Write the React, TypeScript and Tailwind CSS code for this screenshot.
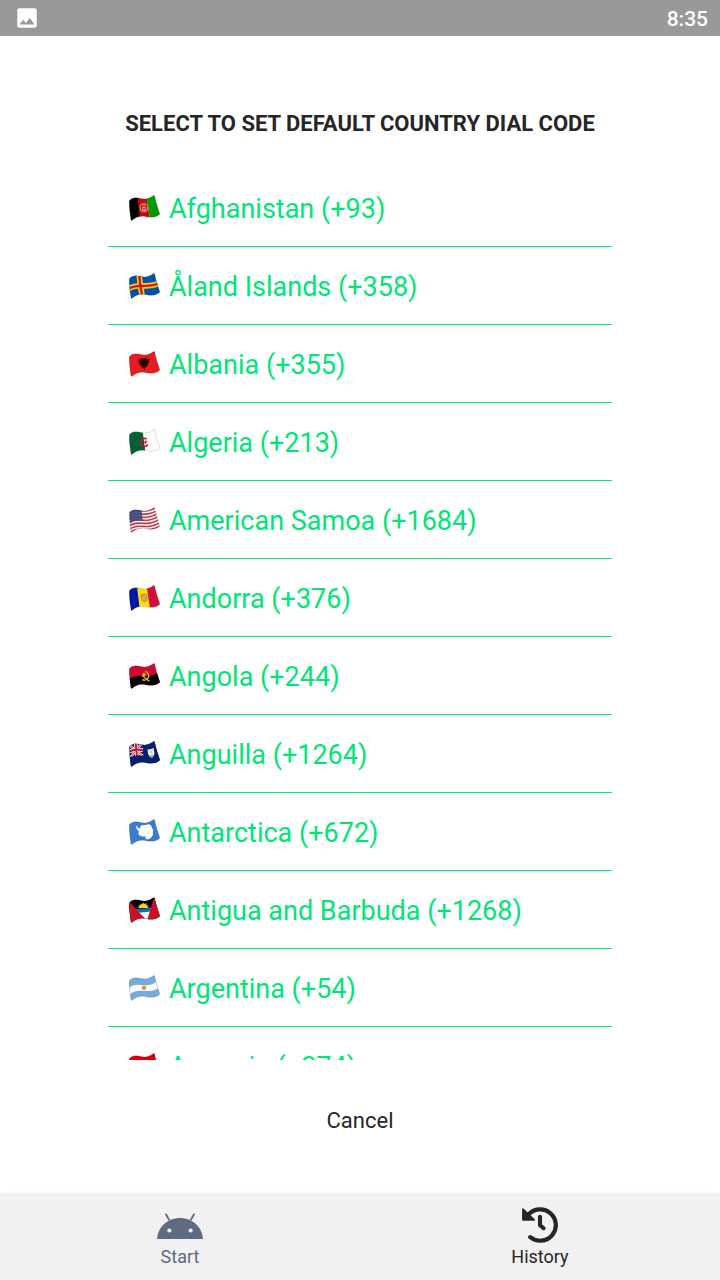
import type { ReactNode } from "react";
import { MdImage } from "react-icons/md";

const OUTLINE =
  "M0.2 6.4 Q0.2 5.4 1 4.9 C4.5 2.3 8 2.5 12 3.6 C17 4.9 20.5 3.2 24.6 0.5 Q25.4 0.1 25.7 1 C26.8 7 28.8 12.6 30.7 18.4 Q30.9 19.2 30.2 19.7 C26.5 22.4 22 22.9 17 21.7 C11.5 20.5 7.5 21.8 3.1 25.2 Q2.3 25.7 2 24.9 C0.9 18 0.2 12 0.2 6.4Z";

function Flag({ code, children }: { code: string; children: ReactNode }) {
  return (
    <svg viewBox="0 0 31 26" className="h-[26px] w-[31px] shrink-0" aria-hidden="true">
      <defs>
        <clipPath id={`flag-${code}`}>
          <path d={OUTLINE} />
        </clipPath>
      </defs>
      <g clipPath={`url(#flag-${code})`}>{children}</g>
      <path d={OUTLINE} fill="none" stroke="#1a1a1a" strokeOpacity="0.2" strokeWidth="0.7" />
    </svg>
  );
}

const stripes = [0, 1, 2, 3, 4, 5, 6];

const countries: { code: string; name: string; dial: string; art: ReactNode }[] = [
  {
    code: "af",
    name: "Afghanistan",
    dial: "+93",
    art: (
      <>
        <path fill="#000" d="M-1 0H9L12 26H-1Z" />
        <path fill="#c10b12" d="M8.3 0H17.4L21.2 26H11.2Z" />
        <path fill="#009a00" d="M17.2 0H31V26H21.2Z" />
        <circle cx="15" cy="12.8" r="3.9" fill="none" stroke="#e58a85" strokeWidth="1.2" />
        <path d="M12.9 14.9h4.4M13.6 12.4h2.8v2.1h-2.8zM15 10.3v2" stroke="#e58a85" strokeWidth="1.1" fill="none" />
      </>
    ),
  },
  {
    code: "ax",
    name: "Åland Islands",
    dial: "+358",
    art: (
      <>
        <path fill="#0053a5" d="M0 0H31V26H0Z" />
        <path d="M10 0Q10.8 13 13.8 26M0 15.5C10 9 18 17 31 9.5" stroke="#ffce00" strokeWidth="5.6" fill="none" />
        <path d="M10 0Q10.8 13 13.8 26M0 15.5C10 9 18 17 31 9.5" stroke="#d21034" strokeWidth="2.3" fill="none" />
      </>
    ),
  },
  {
    code: "al",
    name: "Albania",
    dial: "+355",
    art: (
      <>
        <path fill="#e41e20" d="M0 0H31V26H0Z" />
        <path
          fill="#2a0505"
          d="M14.7 8.2 13 6.7 11.7 7.6 12.7 8.8 9 8.3 10 10.4 9.2 11 10.7 12 10 13 11.7 13.4 11 15 12.8 14.6 12.2 16.5 14 16.2 15.2 18.9 16.1 16.2 18.3 16 17.4 14.4 19.4 14.1 18.6 12.5 20.6 11.4 19.6 10.5 20.8 8 17.3 8.6 18 7.2 16.7 6.6Z"
        />
      </>
    ),
  },
  {
    code: "dz",
    name: "Algeria",
    dial: "+213",
    art: (
      <>
        <path fill="#fbfbfb" d="M0 0H31V26H0Z" />
        <path fill="#006233" d="M0 0H13.3L16.8 26H0Z" />
        <path d="M17.6 10.1A4 4 0 1 0 18.8 15.5" stroke="#d21034" strokeWidth="1.6" fill="none" />
        <path fill="#d21034" d="M18.7 12.6 16.9 12.3 16.1 10.8 15.9 12.5 14.3 13 15.8 13.7 16 15.3 17.1 14Z" />
      </>
    ),
  },
  {
    code: "as",
    name: "American Samoa",
    dial: "+1684",
    art: (
      <>
        <path fill="#f7f3f4" d="M0 0H31V26H0Z" />
        {stripes.map((i) => (
          <path
            key={i}
            d="M-2 6.5C7 -0.5 14 9 29 -0.5"
            transform={`translate(${i * 0.6} ${i * 3.1})`}
            stroke="#bd3d50"
            strokeWidth="1.6"
            fill="none"
          />
        ))}
        <path fill="#48497f" d="M0 0H12.1L13.8 14Q7 12.6 1 16Z" />
        <path
          d="M2 7.2Q7 4.4 12 6M2.3 10Q7 7.2 12.5 8.8M2.7 13Q7 10.4 13 11.8"
          stroke="#8a8ab0"
          strokeWidth="0.7"
          strokeDasharray="0.8 1.2"
          fill="none"
        />
      </>
    ),
  },
  {
    code: "ad",
    name: "Andorra",
    dial: "+376",
    art: (
      <>
        <path fill="#0018a8" d="M0 0H8.5L11.5 26H0Z" />
        <path fill="#fedf00" d="M7.8 0H17.8L21.8 26H11Z" />
        <path fill="#d0103a" d="M17.4 0H31V26H21.4Z" />
        <path fill="#d29a36" d="M11.4 9.4Q14.8 7.7 18 8.9L19 13.6Q18.8 16.3 15.7 17.5 12.3 16.7 11.8 14Z" />
        <path d="M12.8 10.8 17.4 15.2M17 10.2 13.2 15.4" stroke="#e3b04a" strokeWidth="1.2" />
      </>
    ),
  },
  {
    code: "ao",
    name: "Angola",
    dial: "+244",
    art: (
      <>
        <path fill="#cc092f" d="M0 0H31V26H0Z" />
        <path fill="#000" d="M0 16.5C8 9.5 18 17 31 9V26H0Z" />
        <path d="M16.5 8.3Q20.8 10.5 19.4 14.6 17.4 18.3 13.3 16.6M13.5 12.8 20.3 18.3" stroke="#e8bf16" strokeWidth="1.3" fill="none" />
        <path fill="#e8bf16" d="M14.8 9 15.5 10.6 17.2 10.7 16 12 16.4 13.6 14.9 12.8 13.4 13.7 13.8 12 12.7 11 14.2 10.7Z" />
      </>
    ),
  },
  {
    code: "ai",
    name: "Anguilla",
    dial: "+1264",
    art: (
      <>
        <path fill="#07206d" d="M0 0H31V26H0Z" />
        <path d="M0 4 14 15M13 2 1 17" stroke="#fff" strokeWidth="2.3" />
        <path d="M0 4 14 15M13 2 1 17" stroke="#cf142b" strokeWidth="1" />
        <path d="M6.5 1 8 16M0 10.5Q7 7.5 14 9.3" stroke="#fff" strokeWidth="3.6" fill="none" />
        <path d="M6.5 1 8 16M0 10.5Q7 7.5 14 9.3" stroke="#cf142b" strokeWidth="2" fill="none" />
        <path fill="#07206d" d="M13.4 0H31V26H0V16.5Q7 13.5 14.8 15Z" />
        <path fill="#f6f4ed" d="M18.5 8.3Q22 8.8 24.5 7.1L25.5 12.8Q25.2 15.5 22.8 17 20 15.8 19.2 13.3Z" />
        <path fill="#62b6cf" d="M19.5 14Q22.5 15.2 25.3 13.3 25 15.7 22.8 17 20.4 16.2 19.5 14Z" />
        <path d="M20.3 10 23.8 12.4M23.6 9 21.3 12.5" stroke="#e9bd78" strokeWidth="1" />
      </>
    ),
  },
  {
    code: "aq",
    name: "Antarctica",
    dial: "+672",
    art: (
      <>
        <path fill="#3a7dce" d="M0 0H31V26H0Z" />
        <path
          fill="#fff"
          d="M6.9 6.5 8.3 7.4 9.6 9.5 11.2 9.1 11.5 7.1Q13.6 5.6 16.5 6.1L19.3 5.2Q22.5 5.5 22.7 8.3L24.2 11.3 23.8 14 24 16 21.8 19.1 18.5 20.6 16.3 19.2 16.7 17.4 13.5 17.5 10.3 16.6 9.4 14.8 10 12.4 7.7 10Z"
        />
      </>
    ),
  },
  {
    code: "ag",
    name: "Antigua and Barbuda",
    dial: "+1268",
    art: (
      <>
        <path fill="#000" d="M0 0H31V26H0Z" />
        <path fill="#fcd116" d="M8.2 11 10.3 9.9 9.2 8.3 11.3 8.4 11.4 6.4 13 7.5 14.2 5.6 15.3 7.2 17.2 6.1 17.2 8.2 19.4 8.1 18.2 9.8 20.5 11Z" />
        <path fill="#0072c6" d="M4 11.5Q15 12.5 27 9.5L23 16H7Z" />
        <path fill="#fff" d="M7 15.2Q15 16.5 25 13.5L18.5 23Z" />
        <path fill="#ce1126" d="M0 4 18.1 24 18 27H0ZM25.3 0 31 12V27H17.2L18.1 23Z" />
      </>
    ),
  },
  {
    code: "ar",
    name: "Argentina",
    dial: "+54",
    art: (
      <>
        <path fill="#75aadb" d="M0 0H31V26H0Z" />
        <path fill="#fbfbfb" d="M0 12.8C9 5.5 17 14.8 28 6.5L30 12.7C19 20.4 10 11.3 1 19.3Z" />
        <circle cx="15" cy="12.8" r="2.1" fill="#d69a3c" />
        <path d="M15 10v5.6M12.3 12.8h5.4M13.2 11l3.6 3.6M16.8 11l-3.6 3.6" stroke="#d69a3c" strokeWidth="0.6" />
      </>
    ),
  },
  {
    code: "am",
    name: "Armenia",
    dial: "+374",
    art: (
      <>
        <path fill="#d90012" d="M0 0H31V26H0Z" />
        <path fill="#0033a0" d="M0 12C9 6.5 17 14 30 7V26H0Z" />
        <path fill="#f2a800" d="M0 19C9 13 17 20.5 31 13.5V26H0Z" />
      </>
    ),
  },
];

function DroidIcon() {
  return (
    <svg viewBox="0 0 46 26" className="h-[26px] w-[46px]" aria-hidden="true">
      <path d="M8.7 0.8 12.3 7.2M37.3 0.8 33.7 7.2" stroke="currentColor" strokeWidth="1.8" />
      <path fill="currentColor" d="M0.1 26C0.8 14 10.5 5 23 5S45.2 14 45.9 26Z" />
      <circle cx="12.4" cy="17.5" r="2.1" fill="#f1f1f1" />
      <circle cx="33.6" cy="17.5" r="2.1" fill="#f1f1f1" />
    </svg>
  );
}

function HistoryIcon() {
  return (
    <svg viewBox="0 0 36 36" className="size-9" fill="none" stroke="currentColor" aria-hidden="true">
      <path d="M6.2 7.8A15.7 15.7 0 1 1 8.2 30.2" strokeWidth="4.2" strokeLinecap="round" />
      <path d="M18 9.8V18.2L21.6 21.2" strokeWidth="4.1" strokeLinecap="round" strokeLinejoin="round" />
      <path fill="currentColor" strokeWidth="1.6" strokeLinejoin="round" d="M0.9 2V12.9H12.2Z" />
    </svg>
  );
}

export default function App() {
  return (
    <div className="flex h-screen flex-col bg-white font-[Roboto,sans-serif] text-[#262626]">
      <header className="flex h-9 shrink-0 items-center justify-between bg-[#999999] pr-3 pl-3.5 text-white">
        <MdImage size={26} aria-label="Picture saved" />
        <time className="pt-0.5 text-[21px] leading-6 font-medium">8:35</time>
      </header>

      <main className="flex min-h-0 flex-1 flex-col items-center">
        <h1 className="mt-[72px] text-center text-[22px] leading-8 font-bold">
          SELECT TO SET DEFAULT COUNTRY DIAL CODE
        </h1>
        <ul className="mt-[29px] min-h-0 w-[70%] flex-1 overflow-y-auto [scrollbar-width:none]">
          {countries.map((c) => (
            <li key={c.code} className="border-b border-[#00e676]">
              <button
                type="button"
                className="flex h-[77px] w-full items-center gap-[9px] px-[21px] text-left text-[27px] leading-8 text-[#00e676]"
              >
                <Flag code={c.code}>{c.art}</Flag>
                <span className="pt-0.5">
                  {c.name} ({c.dial})
                </span>
              </button>
            </li>
          ))}
        </ul>
        <button type="button" className="mt-9 mb-[49px] h-[49px] px-8 text-[22px] leading-8">
          Cancel
        </button>
      </main>

      <nav className="grid shrink-0 grid-cols-2 bg-[#f1f1f1] text-[18px] leading-6 shadow-[0_0_4px_rgba(0,0,0,0.1)]">
        <a href="#start" className="flex h-[86px] flex-col items-center pt-[13px] text-[#5f6b80]">
          <span className="flex h-[38px] items-center">
            <DroidIcon />
          </span>
          <span>Start</span>
        </a>
        <a href="#history" className="flex h-[86px] flex-col items-center pt-[13px]">
          <span className="flex h-[38px] items-start">
            <HistoryIcon />
          </span>
          <span>History</span>
        </a>
      </nav>
    </div>
  );
}
